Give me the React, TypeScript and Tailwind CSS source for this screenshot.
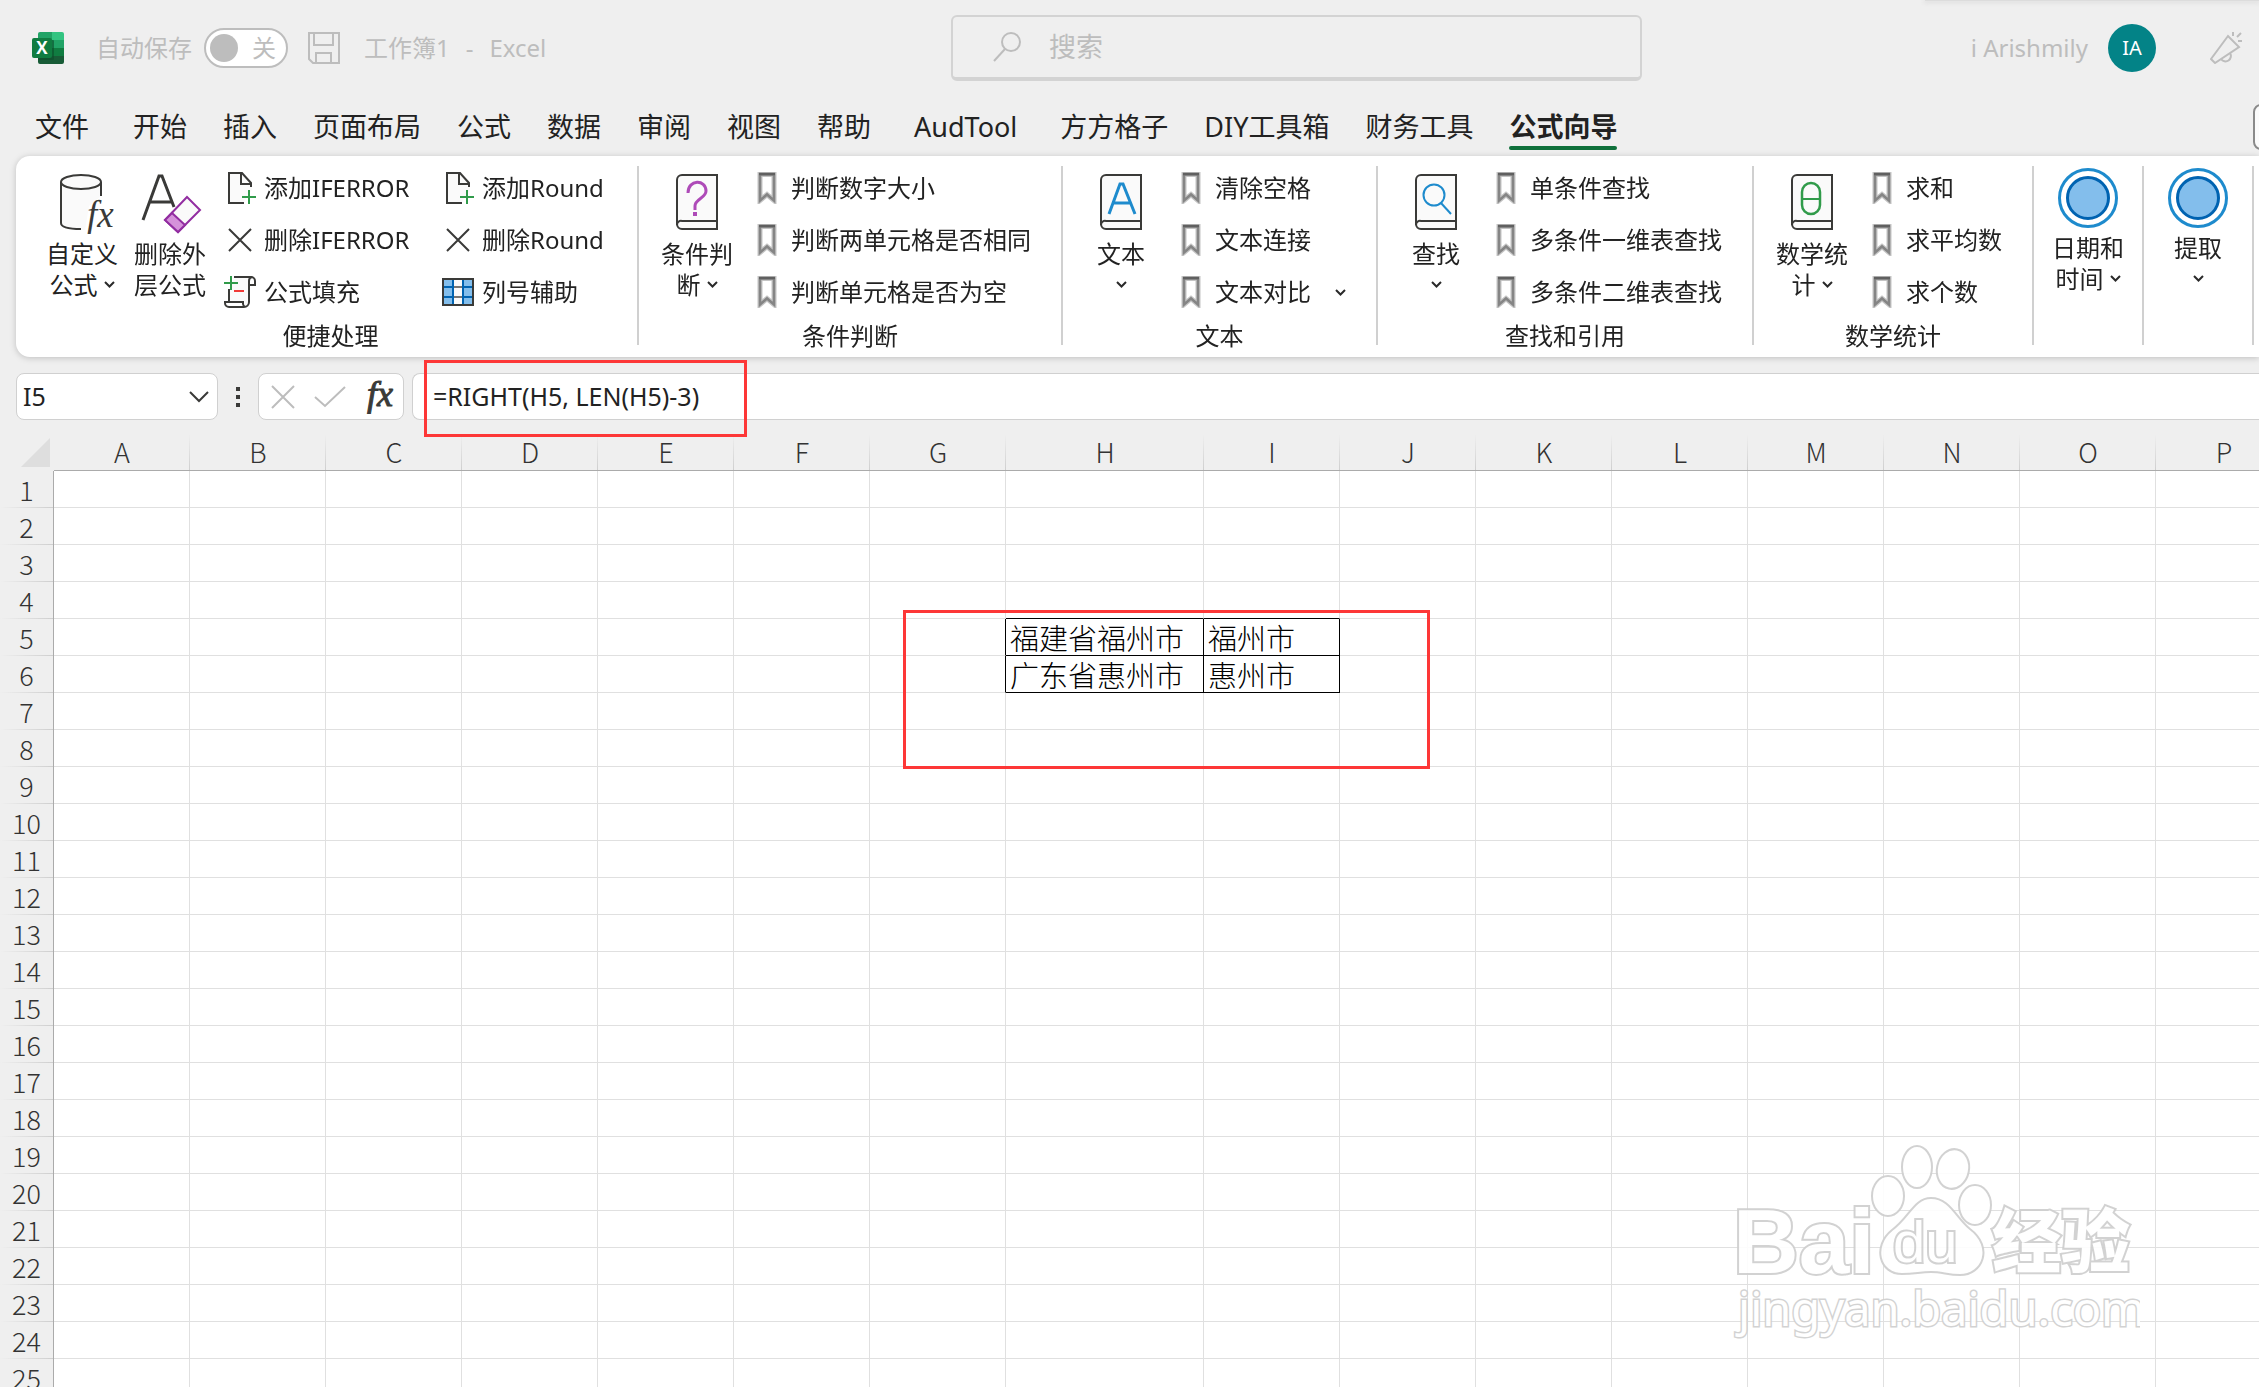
import React from 'react';

type IconProps = { className?: string };

const FONT = "font-['Noto_Sans','Noto_Sans_CJK_SC',sans-serif]";
const CJK = "font-['Noto_Sans_CJK_SC',sans-serif]";

/* ---------- icons ---------- */

const ExcelLogo = () => (
  <svg viewBox="0 0 32 32" className="size-8" aria-label="Excel">
    <path d="M8 0h12v8H6V2a2 2 0 0 1 2-2z" fill="#21a366" />
    <path d="M20 0h10a2 2 0 0 1 2 2v6H20z" fill="#33c481" />
    <path d="M6 8h14v8H6z" fill="#107c41" />
    <path d="M20 8h12v8H20z" fill="#21a366" />
    <path d="M20 16h12v8H20z" fill="#107c41" />
    <path d="M6 16h14v8h12v6a2 2 0 0 1-2 2H8a2 2 0 0 1-2-2z" fill="#185c37" />
    <rect x="6" y="8" width="16" height="20" rx="1" fill="#0b4d2a" opacity=".6" />
    <rect x="0" y="6" width="20" height="20" rx="2" fill="#107c41" />
    <text x="10" y="22" textAnchor="middle" fontFamily="Open Sans" fontWeight="700" fontSize="17" fill="#fff">
      X
    </text>
  </svg>
);

const SaveIcon = () => (
  <svg viewBox="0 0 32 32" className="size-8" fill="none" stroke="#bdbdbd" strokeWidth="2">
    <path d="M1 1h30v30H5l-4-4z" />
    <path d="M6 1v12h19V1M8 31V21h15v10" />
  </svg>
);

const MegaphoneIcon = () => (
  <svg viewBox="0 0 32 32" className="size-8" fill="none" stroke="#bdbdbd" strokeWidth="2">
    <path d="M18 4L1 27l4 4 24-16z" />
    <path d="M11 27a5 5 0 0 0 9-6M23 4V0M27 5l4-4M28 9h4" />
  </svg>
);

const Chevron = ({ className = 'w-[11px]' }: IconProps) => (
  <svg viewBox="0 0 11 7" className={className} fill="none" stroke="#2a2a2a" strokeWidth="2">
    <path d="M1 1l4.5 4.5L10 1" />
  </svg>
);

const CylinderFx = () => (
  <svg viewBox="-12 0 68 60" className="h-[60px] w-[68px]" fill="#fafafa" stroke="#3a3a38" strokeWidth="2">
    <path d="M1 8v42c0 4 8 6 20 6h4l4-24 12-10V8" stroke="none" />
    <path d="M1 8v41c0 4 8 6 20 6M41 8v14" fill="none" />
    <ellipse cx="21" cy="8" rx="20" ry="7" />
    <text x="27" y="53" fontFamily="Liberation Serif" fontStyle="italic" fontSize="37" fill="#3a3a38" stroke="none">
      fx
    </text>
  </svg>
);

const EraseLetter = () => (
  <svg viewBox="-4 0 64 60" className="h-[60px] w-16" fill="none" stroke="#3a3a38" strokeWidth="3">
    <path d="M1 46L17 2h3l12 31M7 28h23" />
    <path d="M45 23l13 13-22 22-13-12z" fill="#fafafa" stroke="#922da1" strokeWidth="2" />
    <path d="M30 39l13 12-7 7-13-12z" fill="#d592da" stroke="#922da1" strokeWidth="2" />
  </svg>
);

const Book = ({ children }: { children: React.ReactNode }) => (
  <svg viewBox="0 0 42 60" className="h-[60px] w-[42px]" fill="none" stroke="#3a3a38" strokeWidth="2">
    <path d="M41 1H6a5 5 0 0 0-5 5v44a5 5 0 0 0 5 5h35z" fill="#fafafa" />
    <path d="M41 47H6a4 4 0 0 0-5 4" />
    {children}
  </svg>
);

const QuestionBook = () => (
  <Book>
    <path d="M12 19c0-14 18-14 18-2 0 7-11 8-11 15v4" stroke="#ae4bb8" strokeWidth="3" />
    <path d="M17 40h4" stroke="#ae4bb8" strokeWidth="4" />
  </Book>
);

const LetterBook = () => (
  <Book>
    <path d="M9 40L20 10h3l12 30M13 29h18" stroke="#1e8bcd" strokeWidth="3" />
  </Book>
);

const SearchBook = () => (
  <Book>
    <circle cx="19" cy="21" r="10.5" stroke="#1e8bcd" />
    <path d="M26 29l10 11" stroke="#1e8bcd" />
  </Book>
);

const ThetaBook = () => (
  <Book>
    <rect x="11" y="9" width="18" height="31" rx="9" stroke="#309b4a" strokeWidth="2.5" />
    <path d="M11 25h18" stroke="#309b4a" />
  </Book>
);

const RingIcon = () => (
  <svg viewBox="0 0 60 60" className="size-[60px]">
    <circle cx="30" cy="30" r="28.5" fill="#fff" stroke="#1e8bcd" strokeWidth="3" />
    <circle cx="30" cy="30" r="20.5" fill="#83beec" stroke="#0063b1" strokeWidth="3" />
  </svg>
);

const Bookmark = () => (
  <svg viewBox="0 0 20 32" className="h-8 w-5 shrink-0" fill="none">
    <path d="M3 2.5h14v26l-7-6-7 6z" stroke="#c4c4c4" strokeWidth="5" />
    <path d="M3 2.5h14v26l-7-6-7 6z" stroke="#858585" strokeWidth="2.5" />
    <path d="M2 2h16" stroke="#606060" strokeWidth="2.5" />
  </svg>
);

const PageAdd = () => (
  <svg viewBox="-4 0 32 32" className="size-8 shrink-0" fill="none" stroke="#3a3a38" strokeWidth="2">
    <path d="M15 31H1V1h14l9 10v7" fill="#fafafa" stroke="none" />
    <path d="M16 31H1V1h13l9 10v4M13 1v11h10" />
    <path d="M21 18v14M14 25h14" stroke="#309b4a" />
  </svg>
);

const Cross = ({ className = 'text-[#3a3a38]' }: IconProps) => (
  <svg viewBox="0 0 24 24" className={`size-6 ${className}`} fill="none" stroke="currentColor" strokeWidth="2">
    <path d="M1 1l22 22M23 1L1 23" />
  </svg>
);

const ScrollIcon = () => (
  <svg viewBox="0 0 32 32" className="size-8 shrink-0" fill="none" stroke="#3a3a38" strokeWidth="2">
    <path d="M11 1h14v24a4 4 0 0 1-4 6V25H5V12z" fill="#fafafa" stroke="none" />
    <path d="M10 1h17a4 4 0 0 1 4 4v4h-6V5a4 4 0 0 1 3-4M25 9v17a5 5 0 0 1-5 5H5a4 4 0 0 1-4-4v-1h18v2a4 4 0 0 0 2 3M5 26V13" />
    <path d="M7 0v14M0 7h14" stroke="#309b4a" />
    <path d="M10 15h10" stroke="#f03a37" />
  </svg>
);

const GridIcon = () => (
  <svg viewBox="0 0 32 28" className="h-7 w-8 shrink-0" fill="none">
    <rect x="1" y="1" width="30" height="26" fill="#83beec" />
    <path d="M11 1h10v26H11z" fill="#fafafa" />
    <path d="M1 9h30M1 19h30" stroke="#0063b1" strokeWidth="2" />
    <path d="M12 9h8M12 19h8" stroke="#797774" strokeWidth="2" />
    <path d="M11 1v26M21 1v26" stroke="#0063b1" strokeWidth="2" />
    <rect x="1" y="1" width="30" height="26" stroke="#3a3a38" strokeWidth="2" />
  </svg>
);

/* ---------- title bar ---------- */

const TitleBar = () => (
  <header className="relative grid h-24 grid-cols-[951fr_691fr_617fr] items-center text-2xl text-[#bdbdbd]">
    <div className="flex items-center pl-8">
      <ExcelLogo />
      <label htmlFor="autosave" className="ml-8">
        自动保存
      </label>
      <div className="relative ml-3 h-10">
        <input
          id="autosave"
          type="checkbox"
          className="block h-10 w-[84px] appearance-none rounded-full border-2 border-[#bdbdbd] bg-white"
        />
        <span className="pointer-events-none absolute inset-0 flex items-center justify-between pr-3 pl-[6px]">
          <span className="size-7 rounded-full bg-[#bdbdbd]" />
          <span className="leading-none">关</span>
        </span>
      </div>
      <button type="button" aria-label="保存" className="ml-5">
        <SaveIcon />
      </button>
      <h1 className="ml-6 flex gap-4">
        <span>工作簿1</span>
        <span>-</span>
        <span>Excel</span>
      </h1>
    </div>

    <label className="flex h-[66px] items-center rounded-md border-2 border-b-4 border-[#d3d3d3] pl-10">
      <svg viewBox="0 0 28 30" className="h-[30px] w-7 shrink-0" fill="none" stroke="#bdbdbd" strokeWidth="2">
        <circle cx="18" cy="10" r="9" />
        <path d="M12 17L1 29" />
      </svg>
      <input
        type="search"
        aria-label="搜索"
        placeholder="搜索"
        className="ml-7 w-full bg-transparent text-[27px] outline-none placeholder:text-[#bdbdbd]"
      />
    </label>

    <div className="flex items-center justify-end pr-[17px]">
      <span>i Arishmily</span>
      <button
        type="button"
        className="ml-5 size-12 rounded-full bg-[#038387] text-xl text-white"
      >
        IA
      </button>
      <button type="button" aria-label="即将推出" className="ml-[54px]">
        <MegaphoneIcon />
      </button>
    </div>

    {/* lower edge of the window docked above */}
    <div className="absolute top-0 right-0 h-px w-[334px] bg-[#dcdcdc] shadow-[0_1px_4px_1px_#dcdcdc]" />
  </header>
);

/* ---------- tabs ---------- */

const TABS = [
  { name: '文件', spacing: 'mr-2' },
  { name: '开始' },
  { name: '插入' },
  { name: '页面布局' },
  { name: '公式' },
  { name: '数据' },
  { name: '审阅' },
  { name: '视图' },
  { name: '帮助' },
  { name: 'AudTool', spacing: 'px-[7px]' },
  { name: '方方格子' },
  { name: 'DIY工具箱' },
  { name: '财务工具' },
  { name: '公式向导' },
];

const TabStrip = ({ active }: { active: string }) => (
  <nav className="flex h-[60px] items-start gap-9 overflow-hidden pl-[35px] text-[27px] whitespace-nowrap">
    {TABS.map(({ name, spacing = '' }) => (
      <button
        key={name}
        type="button"
        className={`flex h-[54px] flex-col justify-between pt-3 ${spacing} ${name === active ? 'font-bold' : ''}`}
      >
        <span className="leading-[38px]">{name}</span>
        {name === active && <span className="h-1 w-full rounded-full bg-[#0f703b]" />}
      </button>
    ))}
    <button
      type="button"
      aria-label="批注"
      className="mt-2 -mr-9 ml-auto h-[46px] w-[42px] rounded-lg border-2 border-[#8a8a8a] bg-[#fbfbfb]"
    />
  </nav>
);

/* ---------- ribbon ---------- */

type BigProps = { icon: React.ReactNode; lines: string[]; menu?: boolean };

const BigButton = ({ icon, lines, menu }: BigProps) => (
  <button type="button" className="flex w-[88px] flex-col items-center">
    <span className="mb-1 flex h-[60px] items-start">{icon}</span>
    {lines.map((line, i) => (
      <span key={i} className="flex h-[31px] items-center gap-[6px] leading-[31px]">
        {line && <span>{line}</span>}
        {menu && i === lines.length - 1 && <Chevron />}
      </span>
    ))}
  </button>
);

type ItemProps = { icon: React.ReactNode; label: string; menu?: boolean };

const SmallItem = ({ icon, label, menu }: ItemProps) => (
  <button type="button" className="flex h-[52px] items-center gap-3">
    <span className="flex w-6 justify-center">{icon}</span>
    <span>{label}</span>
    {menu && <Chevron className="ml-3 w-[11px]" />}
  </button>
);

const Divider = () => <div className="mt-[10px] h-[179px] w-[2px] shrink-0 bg-[#d0d0d0]" />;

type GroupProps = {
  title: string;
  big: BigProps;
  items: ItemProps[];
};

const RibbonGroup = ({ title, big, items }: GroupProps) => (
  <>
    <section className="flex shrink-0 flex-col">
      <div className="flex gap-[14px] pr-[30px] pl-[14px]">
        <div className="pt-[18px]">
          <BigButton {...big} />
        </div>
        <div className="h-[162px] pt-[6px]">
          {items.map((item) => (
            <SmallItem key={item.label} {...item} />
          ))}
        </div>
      </div>
      <h2 className="text-center leading-9">{title}</h2>
    </section>
    <Divider />
  </>
);

const GROUPS: GroupProps[] = [
  {
    title: '条件判断',
    big: { icon: <QuestionBook />, lines: ['条件判', '断'], menu: true },
    items: ['判断数字大小', '判断两单元格是否相同', '判断单元格是否为空'].map((label) => ({ icon: <Bookmark />, label })),
  },
  {
    title: '文本',
    big: { icon: <LetterBook />, lines: ['文本', ''], menu: true },
    items: [
      { icon: <Bookmark />, label: '清除空格' },
      { icon: <Bookmark />, label: '文本连接' },
      { icon: <Bookmark />, label: '文本对比', menu: true },
    ],
  },
  {
    title: '查找和引用',
    big: { icon: <SearchBook />, lines: ['查找', ''], menu: true },
    items: ['单条件查找', '多条件一维表查找', '多条件二维表查找'].map((label) => ({ icon: <Bookmark />, label })),
  },
  {
    title: '数学统计',
    big: { icon: <ThetaBook />, lines: ['数学统', '计'], menu: true },
    items: ['求和', '求平均数', '求个数'].map((label) => ({ icon: <Bookmark />, label })),
  },
];

const Ribbon = () => (
  <div className="ml-4 flex h-[201px] overflow-hidden rounded-l-[14px] bg-white text-2xl whitespace-nowrap">
    <section className="flex shrink-0 flex-col">
      <div className="flex pl-[22px]">
        <div className="flex pt-[18px]">
          <BigButton icon={<CylinderFx />} lines={['自定义', '公式']} menu />
          <BigButton icon={<EraseLetter />} lines={['删除外', '层公式']} />
        </div>
        <div className="ml-[14px] h-[162px] w-[218px] pt-[6px]">
          <SmallItem icon={<PageAdd />} label="添加IFERROR" />
          <SmallItem icon={<Cross />} label="删除IFERROR" />
          <SmallItem icon={<ScrollIcon />} label="公式填充" />
        </div>
        <div className="h-[162px] w-[191px] pt-[6px]">
          <SmallItem icon={<PageAdd />} label="添加Round" />
          <SmallItem icon={<Cross />} label="删除Round" />
          <SmallItem icon={<GridIcon />} label="列号辅助" />
        </div>
      </div>
      <h2 className="pl-2 text-center leading-9">便捷处理</h2>
    </section>
    <Divider />
    {GROUPS.map((group) => (
      <RibbonGroup key={group.title} {...group} />
    ))}
    <div className="px-[10px] pt-3">
      <BigButton icon={<RingIcon />} lines={['日期和', '时间']} menu />
    </div>
    <Divider />
    <div className="px-[10px] pt-3">
      <BigButton icon={<RingIcon />} lines={['提取', '']} menu />
    </div>
    <Divider />
  </div>
);

/* ---------- formula bar ---------- */

const FormulaBar = () => (
  <div className="relative z-10 mt-4 flex h-[47px] pl-4 text-[25px]">
    <div className="flex w-[202px] items-center rounded-lg border border-[#d0d0d0] bg-white pr-2">
      <input aria-label="名称框" defaultValue="I5" className="min-w-0 flex-1 bg-transparent pl-[6px] outline-none" />
      <button type="button" aria-label="名称列表">
        <svg viewBox="0 0 20 12" className="h-3 w-5" fill="none" stroke="#3a3a38" strokeWidth="2">
          <path d="M1 1l9 9 9-9" />
        </svg>
      </button>
    </div>
    <div className="flex w-10 flex-col items-center justify-center gap-1">
      <span className="size-1 bg-[#3a3a38]" />
      <span className="size-1 bg-[#3a3a38]" />
      <span className="size-1 bg-[#3a3a38]" />
    </div>
    <div className="flex w-[146px] items-center justify-between rounded-lg border border-[#d0d0d0] bg-white pr-[9px] pl-3">
      <button type="button" aria-label="取消">
        <Cross className="text-[#bdbdbd]" />
      </button>
      <button type="button" aria-label="输入">
        <svg viewBox="0 0 32 22" className="h-[22px] w-8" fill="none" stroke="#bdbdbd" strokeWidth="2">
          <path d="M1 11l10 9L31 1" />
        </svg>
      </button>
      <svg viewBox="0 0 30 34" className="h-[34px] w-[30px]" role="img" aria-label="插入函数">
        <text
          x="3"
          y="26"
          fontFamily="Liberation Serif"
          fontStyle="italic"
          fontSize="36"
          fill="#3a3a38"
          stroke="#3a3a38"
        >
          fx
        </text>
      </svg>
    </div>
    <input
      aria-label="编辑栏"
      defaultValue="=RIGHT(H5, LEN(H5)-3)"
      className="ml-2 min-w-0 flex-1 rounded-l-lg border border-r-0 border-[#d0d0d0] bg-white pl-5 outline-none"
    />
    <div className="pointer-events-none absolute -top-[13px] left-[424px] h-[77px] w-[323px] border-3 border-[#fd3737]" />
  </div>
);

/* ---------- sheet ---------- */

const COLUMNS = 'ABCDEFGHIJKLMNOP'.split('');
const ROWS = Array.from({ length: 25 }, (_, i) => i + 1);

const CELLS: Record<string, string> = {
  H5: '福建省福州市',
  I5: '福州市',
  H6: '广东省惠州市',
  I6: '惠州市',
};

// a cell owns its right and bottom line, so the box also needs its left and upper neighbours
const BLACK_RIGHT = ['G5', 'G6', 'H5', 'H6', 'I5', 'I6'];
const BLACK_BOTTOM = ['H4', 'I4', 'H5', 'I5', 'H6', 'I6'];

const cellClass = (id: string) => {
  const right = BLACK_RIGHT.includes(id) ? 'border-r-black' : 'border-r-[#e0e0e0]';
  const bottom = BLACK_BOTTOM.includes(id) ? 'border-b-black' : 'border-b-[#e0e0e0]';
  return `h-[37px] border-r border-b bg-white p-0 pl-1 text-[29px] leading-9 font-light text-black ${right} ${bottom}`;
};

const Watermark = () => (
  <svg
    viewBox="0 0 410 200"
    className="pointer-events-none absolute right-[119px] bottom-[43px] h-[200px] w-[410px]"
    fill="#fff"
    stroke="#cfcfcf"
    strokeWidth="2"
    opacity=".92"
  >
    <g strokeWidth="4" paintOrder="stroke">
      <text x="3" y="129" fontSize="91" fontWeight="700" fontFamily="Liberation Sans">
        Bai
      </text>
      <text x="262" y="123" fontSize="69" fontWeight="900" fontFamily="Noto Sans CJK SC">
        经验
      </text>
    </g>
    <ellipse cx="158" cy="52" rx="16" ry="20" />
    <ellipse cx="187" cy="23" rx="15" ry="21" />
    <ellipse cx="223" cy="25" rx="16" ry="20" transform="rotate(12 223 25)" />
    <ellipse cx="245" cy="61" rx="16" ry="20" />
    <path d="M201 54c19 0 25 20 39 31 24 18 13 46-10 46-12 0-18-3-29-3s-16 2-29 2c-23 0-30-28-10-44 17-12 22-32 39-32z" />
    <text x="163" y="118" fontSize="58" strokeWidth="4" paintOrder="stroke" fontFamily="Liberation Sans">
      du
    </text>
    <text x="8" y="182" fontSize="47" strokeWidth="3" paintOrder="stroke" fontFamily="Noto Sans">
      jingyan.baidu.com
    </text>
  </svg>
);

const Sheet = () => (
  <main className={`relative mt-[14px] min-h-0 flex-1 overflow-hidden ${CJK}`}>
    <table className="w-max table-fixed border-separate border-spacing-0 whitespace-nowrap">
      <colgroup>
        <col className="w-[54px]" />
        {COLUMNS.map((c) => (
          <col key={c} className={c === 'H' ? 'w-[198px]' : 'w-[136px]'} />
        ))}
      </colgroup>
      <thead>
        <tr>
          <th className="h-[37px] p-0">
            <svg viewBox="0 0 29 29" className="ml-[21px] size-[29px]">
              <path d="M29 0v29H0z" fill="#dedede" />
            </svg>
          </th>
          {COLUMNS.map((c) => (
            <th
              key={c}
              scope="col"
              className="h-[37px] border-b border-[#ababab] bg-[linear-gradient(to_top,#cfcfcf,#efefef)] bg-[length:1px_100%] bg-right bg-no-repeat p-0 text-[27px] leading-9 font-light text-[#333]"
            >
              {c}
            </th>
          ))}
        </tr>
      </thead>
      <tbody>
        {ROWS.map((r) => (
          <tr key={r}>
            <th
              scope="row"
              className="h-[37px] border-r border-[#ababab] bg-[linear-gradient(to_left,#cfcfcf,#efefef)] bg-[length:100%_1px] bg-bottom bg-no-repeat p-0 text-[27px] leading-9 font-light text-[#333]"
            >
              {r}
            </th>
            {COLUMNS.map((c) => (
              <td key={c} className={cellClass(`${c}${r}`)}>
                {CELLS[`${c}${r}`]}
              </td>
            ))}
          </tr>
        ))}
      </tbody>
    </table>
    <div className="pointer-events-none absolute top-[176px] left-[903px] h-[159px] w-[527px] border-3 border-[#fd3737]" />
    <Watermark />
  </main>
);

const App: React.FC = () => (
  <div className={`flex h-screen flex-col overflow-hidden bg-[#efefef] text-[#222] ${FONT}`}>
    <TitleBar />
    <TabStrip active="公式向导" />
    <div className="drop-shadow-[0_1px_3px_#0003]">
      <Ribbon />
    </div>
    <FormulaBar />
    <Sheet />
  </div>
);

export default App;
